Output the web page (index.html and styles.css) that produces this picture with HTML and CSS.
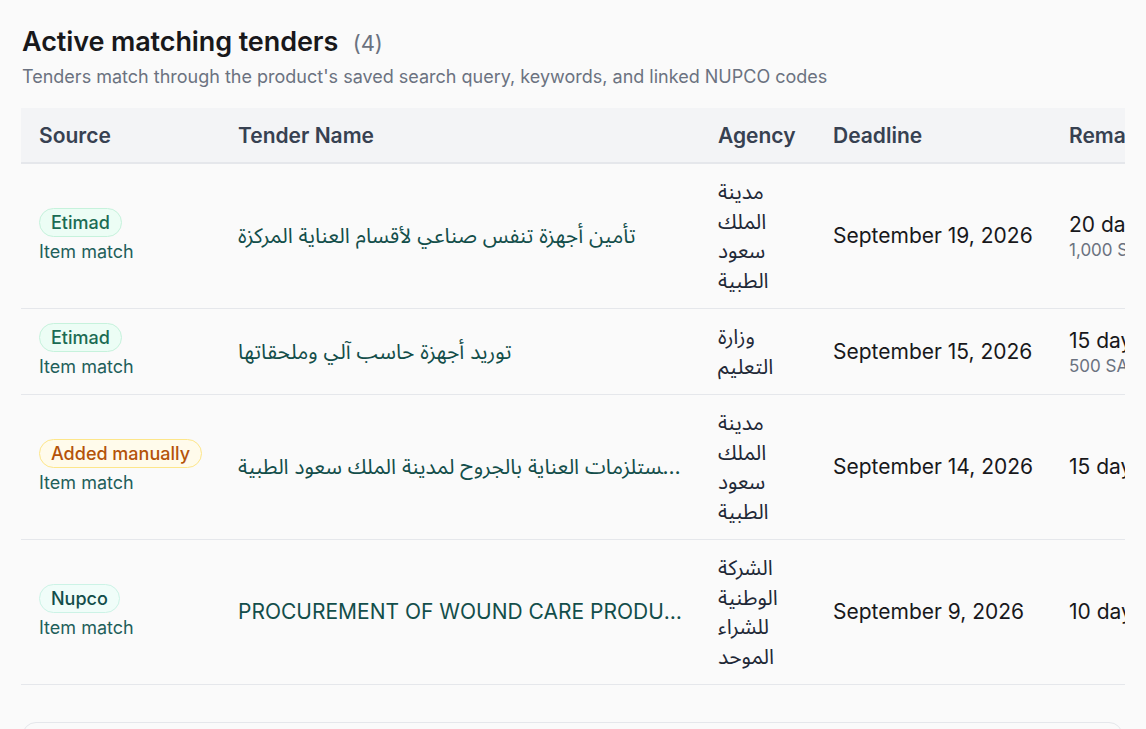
FILE: index.html
```html
<!DOCTYPE html>
<html lang="en">
<head>
<meta charset="utf-8">
<title>Active matching tenders</title>
<link rel="stylesheet" href="styles.css">
</head>
<body>
<main class="page">
  <section class="section">
    <header class="section-head">
      <h2 class="title">Active matching tenders <span class="count">(4)</span></h2>
      <p class="subtitle">Tenders match through the product's saved search query, keywords, and linked NUPCO codes</p>
    </header>
    <div class="table-wrap">
      <table class="tenders">
        <colgroup>
          <col class="c-source">
          <col class="c-name">
          <col class="c-agency">
          <col class="c-deadline">
          <col class="c-remaining">
        </colgroup>
        <thead>
          <tr>
            <th>Source</th>
            <th>Tender Name</th>
            <th>Agency</th>
            <th>Deadline</th>
            <th>Remaining</th>
          </tr>
        </thead>
        <tbody>
          <tr>
            <td>
              <div class="source">
                <span class="badge badge-etimad">Etimad</span>
                <span class="match">Item match</span>
              </div>
            </td>
            <td><div class="name">تأمين أجهزة تنفس صناعي لأقسام العناية المركزة</div></td>
            <td class="agency">مدينة الملك سعود الطبية</td>
            <td class="deadline">September 19, 2026</td>
            <td class="remaining"><div class="days">20 days</div><div class="amount">1,000 SAR</div></td>
          </tr>
          <tr>
            <td>
              <div class="source">
                <span class="badge badge-etimad">Etimad</span>
                <span class="match">Item match</span>
              </div>
            </td>
            <td><div class="name">توريد أجهزة حاسب آلي وملحقاتها</div></td>
            <td class="agency">وزارة التعليم</td>
            <td class="deadline">September 15, 2026</td>
            <td class="remaining"><div class="days">15 days</div><div class="amount">500 SAR</div></td>
          </tr>
          <tr>
            <td>
              <div class="source">
                <span class="badge badge-manual">Added manually</span>
                <span class="match">Item match</span>
              </div>
            </td>
            <td><div class="name">توريد مستلزمات العناية بالجروح لمدينة الملك سعود الطبية</div></td>
            <td class="agency">مدينة الملك سعود الطبية</td>
            <td class="deadline">September 14, 2026</td>
            <td class="remaining"><div class="days">15 days</div></td>
          </tr>
          <tr>
            <td>
              <div class="source">
                <span class="badge badge-nupco">Nupco</span>
                <span class="match">Item match</span>
              </div>
            </td>
            <td><div class="name">PROCUREMENT OF WOUND CARE PRODUCTS FOR HOSPITALS</div></td>
            <td class="agency">الشركة الوطنية للشراء الموحد</td>
            <td class="deadline">September 9, 2026</td>
            <td class="remaining"><div class="days">10 days</div></td>
          </tr>
        </tbody>
      </table>
    </div>
    <div class="next-card"></div>
  </section>
</main>
</body>
</html>
```

FILE: styles.css
```css
* { box-sizing: border-box; }

html, body {
  margin: 0;
  padding: 0;
  background: #fafafa;
}

body {
  font-family: "Inter", "Noto Sans Arabic UI", "Noto Sans Arabic", "Noto Kufi Arabic", sans-serif;
  color: #111827;
}

.page {
  padding: 26px 21px 0 21px;
  height: 729px;
  overflow: hidden;
}

.section-head {
  padding-left: 1px;
  margin-bottom: 19px;
}

.title {
  margin: 0;
  font-size: 27px;
  line-height: 32px;
  font-weight: 600;
  color: #18181b;
  letter-spacing: -0.1px;
}

.count {
  margin-left: 8px;
  font-size: 22px;
  font-weight: 400;
  color: #6b7280;
}

.subtitle {
  margin: 6px 0 0 0;
  font-size: 18px;
  line-height: 24px;
  color: #6b7280;
}

.table-wrap {
  width: 1104px;
  overflow: hidden;
}

.tenders {
  border-collapse: collapse;
  table-layout: fixed;
  width: 1250px;
}

.c-source { width: 199px; }
.c-name { width: 480px; }
.c-agency { width: 115px; }
.c-deadline { width: 236px; }
.c-remaining { width: 220px; }

.tenders th {
  background: #f3f4f6;
  text-align: left;
  font-size: 21px;
  font-weight: 600;
  color: #374151;
  height: 55px;
  padding: 0 18px;
  border-bottom: 2px solid #e5e7eb;
  white-space: nowrap;
}

.tenders td {
  padding: 13px 18px;
  font-size: 21px;
  line-height: 29.5px;
  vertical-align: middle;
  border-bottom: 1px solid #e5e7eb;
}

.source {
  display: flex;
  flex-direction: column;
  align-items: flex-start;
  gap: 2px;
}

.badge {
  display: inline-block;
  font-size: 18px;
  line-height: 27px;
  font-weight: 500;
  padding: 0 11px;
  border-radius: 999px;
  border: 1px solid;
  white-space: nowrap;
}

.badge-etimad {
  background: #ecfdf5;
  border-color: #c6f2dc;
  color: #1b6b53;
}

.badge-manual {
  background: #fffbeb;
  border-color: #fde68a;
  color: #b45309;
}

.badge-nupco {
  background: #f0fdf9;
  border-color: #ccf3e6;
  color: #134e4a;
}

.match {
  font-size: 18px;
  line-height: 26px;
  color: #1f5f5a;
}

.name {
  color: #134e4a;
  white-space: nowrap;
  overflow: hidden;
  text-overflow: ellipsis;
}

.agency {
  color: #1f2937;
}

.deadline {
  color: #18181b;
  white-space: nowrap;
}

.remaining {
  white-space: nowrap;
}

.days {
  color: #18181b;
  line-height: 28px;
}

.amount {
  font-size: 17px;
  line-height: 22px;
  color: #6b7280;
}

.next-card {
  margin-top: 37px;
  width: 1101px;
  height: 60px;
  margin-left: 1px;
  border: 1px solid #e5e7eb;
  border-radius: 14px;
  background: #fafafa;
}
```
